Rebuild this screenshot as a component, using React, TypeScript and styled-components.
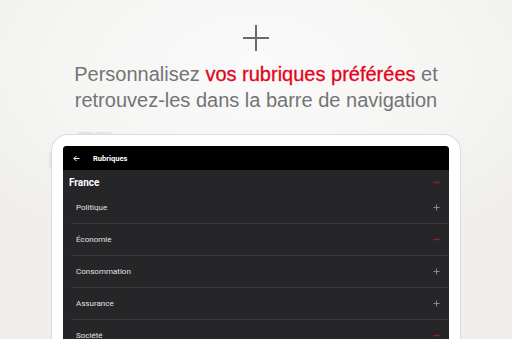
import React from "react";
import styled, { createGlobalStyle } from "styled-components";

const GlobalStyle = createGlobalStyle`
  html, body {
    margin: 0;
    padding: 0;
  }
  body {
    font-family: "Liberation Sans", Arial, sans-serif;
  }
`;

type Rubrique = { label: string; selected: boolean };

const rubriques: Rubrique[] = [
  { label: "Politique", selected: false },
  { label: "Économie", selected: true },
  { label: "Consommation", selected: false },
  { label: "Assurance", selected: false },
  { label: "Société", selected: true },
];

const Toggle: React.FC<{ selected: boolean }> = ({ selected }) => (
  <ToggleIcon viewBox="0 0 8 8" $selected={selected}>
    <path d="M0.5 4h7" />
    {!selected && <path d="M4 0.5v7" />}
  </ToggleIcon>
);

const App: React.FC = () => {
  return (
    <Page>
      <GlobalStyle />
      <PlusMark viewBox="0 0 26 26">
        <path d="M0 13h26M13 0v26" />
      </PlusMark>
      <Headline>
        Personnalisez <Accent>vos rubriques préférées</Accent> et
        <br />
        retrouvez-les dans la barre de navigation
      </Headline>
      <Tablet>
        <TopButton $left={26} $width={15} />
        <TopButton $left={43} $width={17} />
        <SideButton />
        <Screen>
          <AppBar>
            <BackArrow viewBox="0 0 8 8">
              <path d="M7.5 4H1M4 1L1 4l3 3" />
            </BackArrow>
            <AppTitle>Rubriques</AppTitle>
          </AppBar>
          <Section>
            <SectionTitle>France</SectionTitle>
            <Toggle selected />
          </Section>
          {rubriques.map((r) => (
            <Row key={r.label}>
              <RowLabel>{r.label}</RowLabel>
              <Toggle selected={r.selected} />
            </Row>
          ))}
        </Screen>
      </Tablet>
    </Page>
  );
};

export default App;

const Page = styled.main`
  width: 512px;
  height: 339px;
  overflow: hidden;
  display: flex;
  flex-direction: column;
  align-items: center;
  background: radial-gradient(
    ellipse 70% 60% at 50% 20%,
    #fafafa 0%,
    #f5f5f4 55%,
    #efeeec 100%
  );
  & > * {
    flex-shrink: 0;
  }
`;

const PlusMark = styled.svg`
  display: block;
  width: 26px;
  height: 26px;
  margin-top: 25px;
  stroke: #6a6a6a;
  stroke-width: 2;
  fill: none;
`;

const Headline = styled.h1`
  margin: 10px 0 0;
  font-size: 20px;
  line-height: 26px;
  font-weight: 400;
  color: #747474;
  text-align: center;
  white-space: nowrap;
`;

const Accent = styled.span`
  color: #e3051b;
  -webkit-text-stroke: 0.3px #e3051b;
`;

const Tablet = styled.div`
  position: relative;
  margin-top: 21px;
  width: 386px;
  flex: 1 0 auto;
  padding: 11px 11px 0 11px;
  background: #ffffff;
  border: 1.5px solid #dcdcdb;
  border-bottom: none;
  border-radius: 17px 17px 0 0;
`;

const TopButton = styled.span<{ $left: number; $width: number }>`
  position: absolute;
  top: -3px;
  left: ${(p) => p.$left}px;
  width: ${(p) => p.$width}px;
  height: 2px;
  background: #e4e4e3;
  border-radius: 2px 2px 0 0;
`;

const SideButton = styled.span`
  position: absolute;
  left: -3px;
  top: 17px;
  width: 2px;
  height: 16px;
  background: #e4e4e3;
  border-radius: 2px 0 0 2px;
`;

const Screen = styled.div`
  height: 100%;
  background: #262528;
  border-radius: 4px 4px 0 0;
  overflow: hidden;
  font-family: Roboto, "Liberation Sans", sans-serif;
`;

const AppBar = styled.div`
  height: 24px;
  display: flex;
  align-items: center;
  padding-left: 10px;
  background: #000000;
`;

const BackArrow = styled.svg`
  width: 7px;
  height: 7px;
  stroke: #ffffff;
  stroke-width: 1.1;
  fill: none;
`;

const AppTitle = styled.span`
  margin-left: 13px;
  font-size: 7.5px;
  font-weight: 700;
  color: #ffffff;
`;

const Section = styled.div`
  height: 22px;
  display: flex;
  align-items: center;
  justify-content: space-between;
  padding: 2px 9px 0 6px;
  box-sizing: border-box;
`;

const SectionTitle = styled.span`
  font-size: 10px;
  font-weight: 700;
  color: #ffffff;
`;

const Row = styled.div`
  height: 31px;
  margin-left: 8px;
  display: flex;
  align-items: center;
  justify-content: space-between;
  padding: 0 9px 0 5px;
  border-bottom: 1px solid #3a393c;
`;

const RowLabel = styled.span`
  font-size: 8px;
  font-weight: 400;
  color: #e2e2e2;
`;

const ToggleIcon = styled.svg<{ $selected: boolean }>`
  width: 7px;
  height: 7px;
  fill: none;
  stroke: ${(p) => (p.$selected ? "#9a1b2b" : "#8a898c")};
  stroke-width: ${(p) => (p.$selected ? 1.6 : 1.1)};
`;
